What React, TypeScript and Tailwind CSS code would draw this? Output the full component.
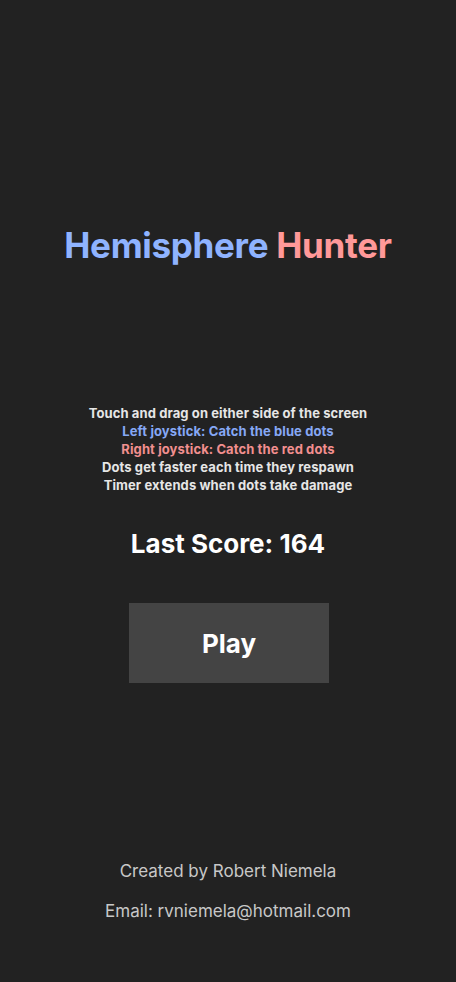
import React from 'react';

const font = { fontFamily: 'Inter, "Noto Sans", sans-serif' };

const App: React.FC = () => (
  <div
    className="min-h-[982px] w-full bg-[#222222] flex flex-col items-center text-center select-none"
    style={font}
  >
    <h1 className="mt-[224px] text-[35px] leading-[43px] font-bold tracking-[-0.3px]">
      <span className="text-[#8fb3ff]">Hemisphere</span>{' '}
      <span className="text-[#ff9999]">Hunter</span>
    </h1>

    <div className="mt-[137px] text-[13px] leading-[18px] font-bold tracking-[0.1px] text-[#e6e6e6]">
      <div>Touch and drag on either side of the screen</div>
      <div className="text-[#86a8f5]">Left joystick: Catch the blue dots</div>
      <div className="text-[#f28f8f]">Right joystick: Catch the red dots</div>
      <div>Dots get faster each time they respawn</div>
      <div>Timer extends when dots take damage</div>
    </div>

    <div className="mt-[34px] text-[26px] leading-[32px] font-bold text-white">Last Score: 164</div>

    <button
      type="button"
      className="mt-[43px] ml-[2px] w-[200px] h-[80px] bg-[#444444] text-white text-[26px] font-bold flex items-center justify-center"
    >
      Play
    </button>

    <div className="mt-[176px] text-[17px] leading-[24px] text-[#c8c8c8]">
      <div>Created by Robert Niemela</div>
      <div className="mt-[16px]">Email: rvniemela@hotmail.com</div>
    </div>
  </div>
);

export default App;
